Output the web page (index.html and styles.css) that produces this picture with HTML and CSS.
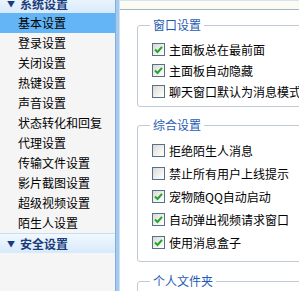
FILE: index.html
```html
<html lang="zh-CN">

<head>
    <meta charset="UTF-8">
    <meta name="viewport" content="width=device-width, initial-scale=1.0">
    <title>系统设置</title>
    <link rel="stylesheet" href="styles.css">
</head>

<body>
    <div class="window">
        <div class="sidebar">
            <div class="group-head"><span class="arrow">&#9660;</span>系统设置</div>
            <div class="nav-item active">基本设置</div>
            <div class="nav-item">登录设置</div>
            <div class="nav-item">关闭设置</div>
            <div class="nav-item">热键设置</div>
            <div class="nav-item">声音设置</div>
            <div class="nav-item">状态转化和回复</div>
            <div class="nav-item">代理设置</div>
            <div class="nav-item">传输文件设置</div>
            <div class="nav-item">影片截图设置</div>
            <div class="nav-item">超级视频设置</div>
            <div class="nav-item">陌生人设置</div>
            <div class="group-head"><span class="arrow">&#9660;</span>安全设置</div>
        </div>
        <div class="splitter"></div>
        <div class="panel">
            <div class="panel-top"></div>

            <fieldset class="box">
                <legend>窗口设置</legend>
                <label class="check-row"><span class="check on"><svg viewBox="0 0 9 9" width="9" height="9"><path d="M1 4.5 L3.5 7 L8 1.8" /></svg></span>主面板总在最前面</label>
                <label class="check-row"><span class="check on"><svg viewBox="0 0 9 9" width="9" height="9"><path d="M1 4.5 L3.5 7 L8 1.8" /></svg></span>主面板自动隐藏</label>
                <label class="check-row"><span class="check"></span>聊天窗口默认为消息模式</label>
            </fieldset>

            <fieldset class="box box-wide">
                <legend>综合设置</legend>
                <label class="check-row"><span class="check"></span>拒绝陌生人消息</label>
                <label class="check-row"><span class="check"></span>禁止所有用户上线提示</label>
                <label class="check-row"><span class="check on"><svg viewBox="0 0 9 9" width="9" height="9"><path d="M1 4.5 L3.5 7 L8 1.8" /></svg></span>宠物随QQ自动启动</label>
                <label class="check-row"><span class="check on"><svg viewBox="0 0 9 9" width="9" height="9"><path d="M1 4.5 L3.5 7 L8 1.8" /></svg></span>自动弹出视频请求窗口</label>
                <label class="check-row"><span class="check on"><svg viewBox="0 0 9 9" width="9" height="9"><path d="M1 4.5 L3.5 7 L8 1.8" /></svg></span>使用消息盒子</label>
            </fieldset>

            <fieldset class="box box-last">
                <legend>个人文件夹</legend>
            </fieldset>
        </div>
    </div>
</body>

</html>
```

FILE: styles.css
```css
body {
    margin: 0;
    background: #ffffff;
    font-family: "Noto Sans CJK SC", "Liberation Sans", sans-serif;
    font-size: 12px;
    color: #000000;
}

.window {
    display: flex;
    width: 299px;
    height: 291px;
    overflow: hidden;
}

.sidebar {
    width: 115px;
    flex-shrink: 0;
    background-color: #f5f5f5;
    display: flex;
    flex-direction: column;
}

.group-head {
    height: 20px;
    line-height: 20px;
    padding-left: 7px;
    font-weight: bold;
    color: #1b3c7a;
    background: linear-gradient(to bottom, #f2f8fe, #d7eafb);
    border-top: 1px solid #c6def4;
    box-sizing: border-box;
}

.group-head:first-child {
    margin-top: -7px;
}

.arrow {
    display: inline-block;
    font-size: 8px;
    width: 13px;
    vertical-align: top;
}

.nav-item {
    height: 20px;
    line-height: 20px;
    padding-left: 18px;
    white-space: nowrap;
}

.nav-item.active {
    background-color: #63b5f6;
}

.splitter {
    width: 3px;
    flex-shrink: 0;
    background-color: #a6c9ee;
    border-left: 1px solid #86aedb;
    border-right: 1px solid #cfe2f6;
}

.panel {
    flex: 1;
    min-width: 0;
    display: flex;
    flex-direction: column;
    overflow: hidden;
}

.panel-top {
    height: 8px;
    flex-shrink: 0;
    background-color: #fcfbf2;
    border-top: 1px solid #d3e4f4;
    border-bottom: 1px solid #a2b5c6;
}

.box {
    margin: 8px 0 0 17px;
    width: 250px;
    flex-shrink: 0;
    padding: 7px 0 4px 12px;
    border: 1px solid #bfcad6;
    border-radius: 3px;
}

.box + .box {
    margin-top: 11px;
}

.box-wide {
    padding-bottom: 7px;
}

.box.box-last {
    margin-top: 12px;
    min-height: 30px;
}

.box legend {
    padding: 0 3px;
    line-height: 14px;
    color: #1f5cb4;
}

.check-row {
    display: flex;
    align-items: center;
    height: 21px;
    white-space: nowrap;
}

.box-wide .check-row {
    height: 23px;
}

.check {
    width: 11px;
    height: 11px;
    margin: 0 4px 0 2px;
    border: 1px solid #56708c;
    background: linear-gradient(135deg, #d9d9d4, #f6f6f3 70%, #ffffff);
    display: flex;
    align-items: center;
    justify-content: center;
    flex-shrink: 0;
}

.check svg path {
    fill: none;
    stroke: #22a52a;
    stroke-width: 2;
}
```
